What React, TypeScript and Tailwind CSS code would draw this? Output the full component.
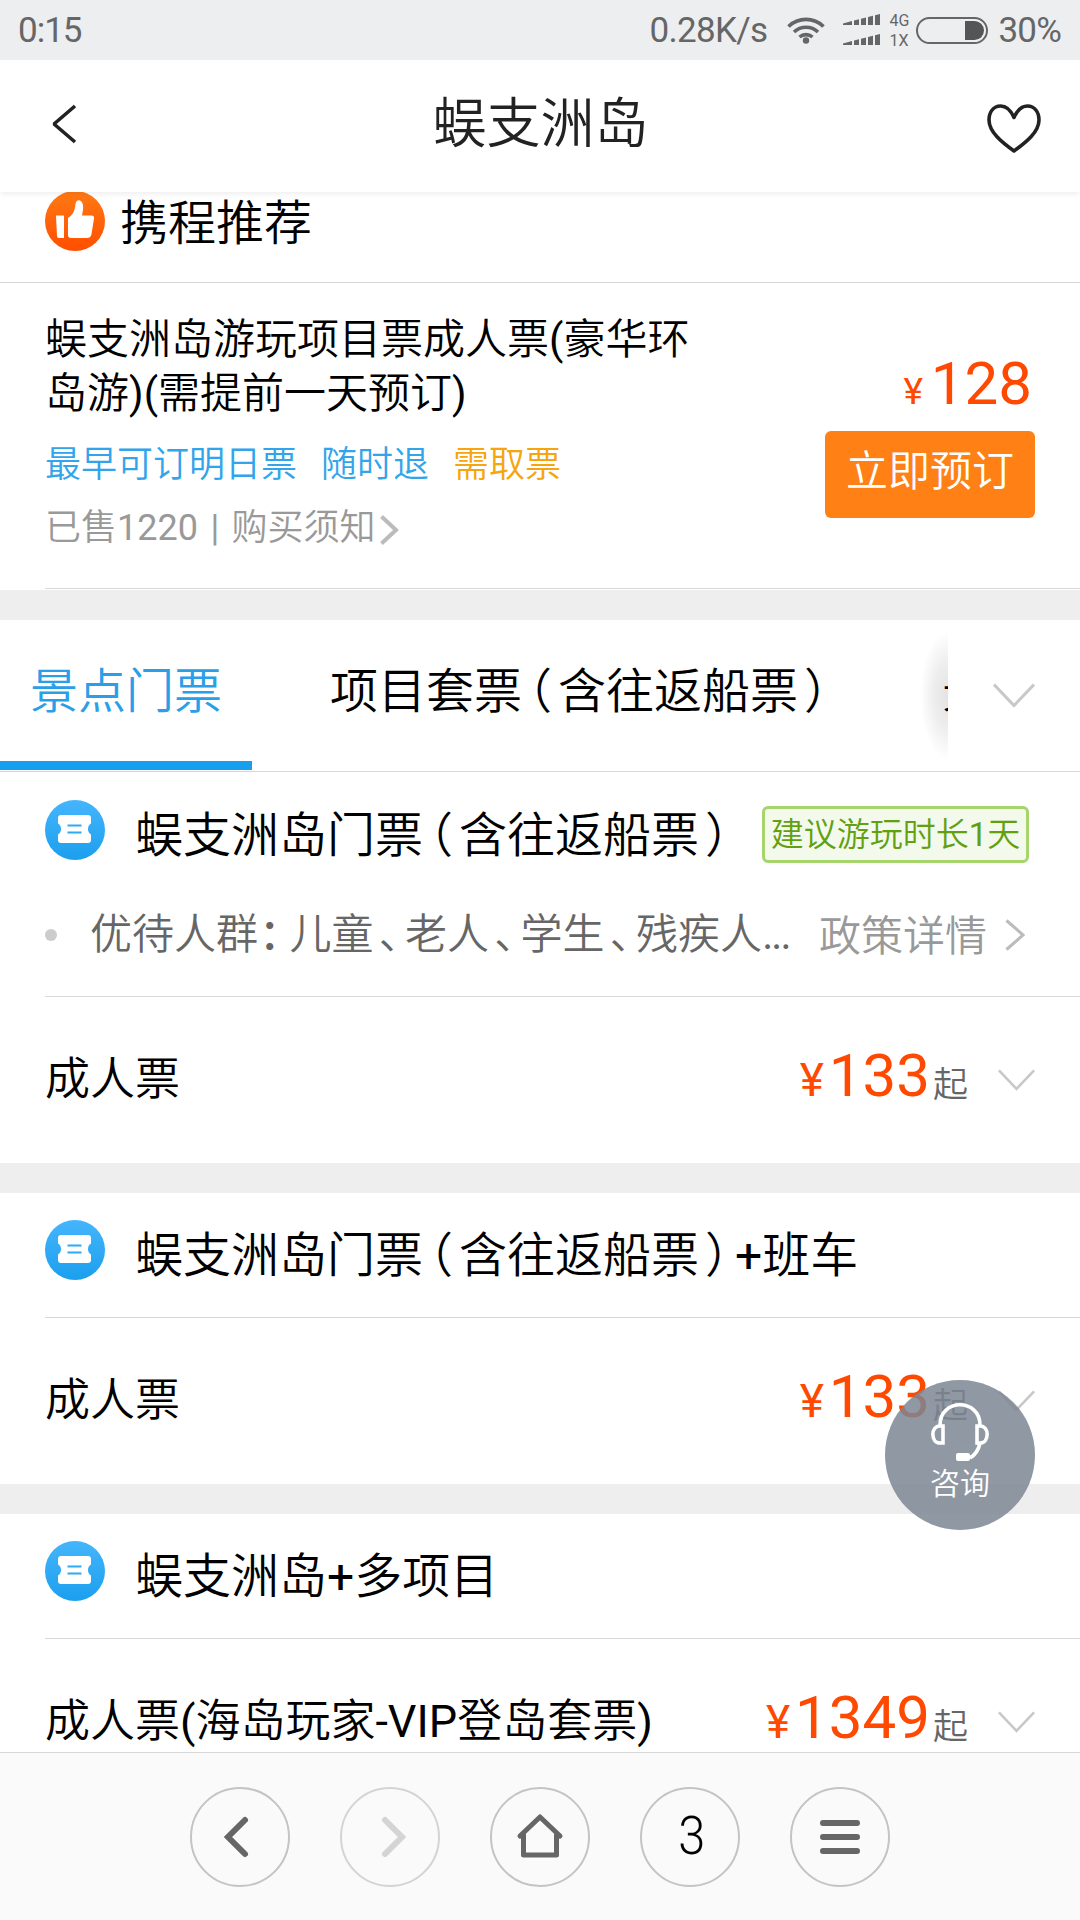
import { Fragment, type ReactNode } from 'react';

interface TicketGroup {
  id: string;
  title: string;
  badge?: string;
  policy?: string;
  ticket: string;
  price: string;
}

const groups: TicketGroup[] = [
  {
    id: 'entry',
    title: '蜈支洲岛门票（含往返船票）',
    badge: '建议游玩时长1天',
    policy: '优待人群：儿童、老人、学生、残疾人...',
    ticket: '成人票',
    price: '133',
  },
  {
    id: 'bus',
    title: '蜈支洲岛门票（含往返船票）+班车',
    ticket: '成人票',
    price: '133',
  },
  {
    id: 'multi',
    title: '蜈支洲岛+多项目',
    ticket: '成人票(海岛玩家-VIP登岛套票)',
    price: '1349',
  },
];

// Full-width punctuation is set three quarters of an em wide,
// latin runs get the regular weight next to the lighter hanzi
const Han = ({ children }: { children: string }) => (
  <>
    {children.split(/([（）：、]|[ -~]+)/).map((part, i) => {
      if (part === '：') {
        return (
          <span key={i} className="ml-[0.03em] mr-[0.22em] font-medium [font-feature-settings:'halt']">
            {part}
          </span>
        );
      }
      if (/^[（）、]$/.test(part)) {
        return (
          <span key={i} className="mx-[0.125em] [font-feature-settings:'halt']">
            {part}
          </span>
        );
      }
      if (part === '...') {
        return (
          <span key={i} className="font-normal tracking-[-0.045em]">
            {part}
          </span>
        );
      }
      if (/^[ -~]+$/.test(part)) {
        return (
          <span key={i} className="font-normal">
            {part}
          </span>
        );
      }
      return <Fragment key={i}>{part}</Fragment>;
    })}
  </>
);

const ChevronDown = ({ className }: { className: string }) => (
  <svg viewBox="0 0 42 25" className={className} fill="none" stroke="#c8c8c8" strokeWidth="3">
    <path d="M1 1.5 21 22.5 41 1.5" />
  </svg>
);

const StatusBar = () => (
  <div className="flex h-[60px] items-center bg-[#edeef0] pl-[18px] pr-[19px] text-[35px] leading-[60px] text-[#666]">
    <span className="pt-[2px] -tracking-[1px]">0:15</span>
    <span className="ml-auto pt-[2px] -tracking-[0.7px]">0.28K/s</span>
    <svg viewBox="0 0 38 28" className="ml-[20px] h-7 w-[38px]" fill="none" stroke="#666" strokeWidth="3.6">
      <path d="M1.5 10.5a25 25 0 0 1 35 0M7 16a17.5 17.5 0 0 1 24 0M12.5 21a10 10 0 0 1 13 0" />
      <circle cx="19" cy="24.5" r="3.2" fill="#666" stroke="none" />
    </svg>
    <svg viewBox="0 0 37 32" className="ml-[18px] h-8 w-[37px]" fill="#666">
      <path d="M0 9.5 9 7v4H0zM11 6.5l5-1.2V11h-5zM18 4.7l5-1.2V11h-5zM25 3l5-1.2V11h-5zM32 1.2 37 0v11h-5z" />
      <path d="M0 29.5 9 27v4H0zM11 26.5l5-1.2V31h-5zM18 24.7l5-1.2V31h-5zM25 23l5-1.2V31h-5zM32 21.2 37 20v11h-5z" />
    </svg>
    <span className="ml-[9px] mt-px flex w-[22px] flex-col text-[16px] leading-5">
      <span>4G</span>
      <span>1X</span>
    </span>
    <span className="ml-[5px] flex h-[27px] w-[72px] justify-end rounded-full border-2 border-[#666] p-[2px]">
      <span className="w-[19px] rounded-r-full bg-[#555]" />
    </span>
    <span className="ml-[10px] pt-[2px] -tracking-[0.8px]">30%</span>
  </div>
);

const Header = () => (
  <header className="relative z-10 flex h-[132px] items-center justify-between bg-white pl-[51px] pr-[38px] shadow-[0_3px_5px_-1px_rgba(0,0,0,0.07)]">
    <svg viewBox="0 0 26 40" className="-mt-1 h-10 w-[26px]" fill="none" stroke="#222" strokeWidth="3.6" strokeLinejoin="bevel">
      <path d="M24 2 3 20l21 18" />
    </svg>
    <h1 className="pb-[3px] pl-[18px] text-[54px] font-[350] leading-[60px] text-[#222]">蜈支洲岛</h1>
    <svg viewBox="0 0 56 50" className="mt-1 h-[50px] w-14" fill="none" stroke="#222" strokeWidth="3.6" strokeLinejoin="round">
      <path d="M28 14.5C24.5 6.5 20 3 14.5 3 7.5 3 3 9 3 17c0 12 13 22.5 25 31 12-8.5 25-19 25-31 0-8-4.5-14-11.5-14C36 3 31.5 6.5 28 14.5z" />
    </svg>
  </header>
);

const ThumbIcon = () => (
  <svg viewBox="0 0 60 60" className="size-[60px]">
    <defs>
      <linearGradient id="thumb" x1="0" y1="0" x2="0" y2="1">
        <stop offset="0" stopColor="#ff7a14" />
        <stop offset="1" stopColor="#ff4e00" />
      </linearGradient>
    </defs>
    <circle cx="30" cy="30" r="30" fill="url(#thumb)" />
    <g fill="#fff">
      <path d="M11 24.5h8V47h-5q-2 0-2-2z" />
      <path d="M23 27c4-2 7-7 7.5-14 .5-5.5 6.5-5 7.5 1 .5 4-.5 7-1 10.5h9.5q3 0 2.5 3L46.5 43q-.5 4-4.5 4H26q-3 0-3-3z" />
    </g>
  </svg>
);

const TicketIcon = () => (
  <svg viewBox="0 0 60 60" className="size-[60px] shrink-0">
    <defs>
      <linearGradient id="ticket" x1="0" y1="0" x2="0" y2="1">
        <stop offset="0" stopColor="#45b5fc" />
        <stop offset="1" stopColor="#1b9fee" />
      </linearGradient>
    </defs>
    <circle cx="30" cy="30" r="30" fill="url(#ticket)" />
    <path
      d="M16 15h27q3 0 3 3v5.5c-4 2-4 9 0 11V40q0 3-3 3H16q-3 0-3-3v-5.5c4-2 4-9 0-11V18q0-3 3-3z"
      fill="#fff"
    />
    <path d="M22.5 25.5h14M22.5 32.5h14" stroke="#2ea9f5" strokeWidth="2" />
  </svg>
);

const Recommended = () => (
  <section>
    <div className="-mt-px flex h-[92px] gap-[15px] border-b border-[#d8d8d8] pl-[45px]">
      <ThumbIcon />
      <h2 className="pt-[3px] text-[48px] leading-[60px]">携程推荐</h2>
    </div>
    <div className="flex h-[305px] justify-between pl-[45px] pr-[45px]">
      <div className="flex w-[660px] flex-col pt-[30px]">
        <h3 className="text-[42px] leading-[54px]">
          <Han>蜈支洲岛游玩项目票成人票(豪华环岛游)(需提前一天预订)</Han>
        </h3>
        <p className="mt-[17px] flex gap-6 text-[36px] leading-[54px] text-[#32a5ea]">
          <span>最早可订明日票</span>
          <span>随时退</span>
          <span className="text-[#f5a50f]">需取票</span>
        </p>
        <p className="mt-[9px] flex items-center text-[36px] leading-[54px] text-[#999]">
          <span className="[word-spacing:3.5px]">
            <Han>已售1220 | 购买须知</Han>
          </span>
          <svg viewBox="0 0 20 30" className="ml-1 mt-1 h-[30px] w-5" fill="none" stroke="#bbb" strokeWidth="4">
            <path d="M1.5 1.5 16 15 1.5 28.5" />
          </svg>
        </p>
      </div>
      <div className="flex flex-col items-end pt-[64px]">
        <p className="pr-[3px] font-normal leading-[74px] text-[#ff4800]">
          <span className="mr-2 text-[37px]">¥</span>
          <span className="text-[60px]">128</span>
        </p>
        <button
          type="button"
          className="-mt-[5px] h-[87px] w-[210px] rounded-[6px] bg-[#ff8014] pb-[6px] text-[42px] text-white"
        >
          立即预订
        </button>
      </div>
    </div>
    <div className="ml-[45px] h-px bg-[#d8d8d8]" />
    <div className="mt-px h-[30px] bg-[#eee]" />
  </section>
);

const Tabs = () => (
  <nav className="mb-px flex h-[152px] border-b border-[#d8d8d8] text-[48px] leading-[143px]">
    <div className="flex w-[948px] gap-12 overflow-hidden whitespace-nowrap bg-[radial-gradient(28px_64px_at_right_center,rgba(0,0,0,0.11),rgba(0,0,0,0.07)_50%,transparent)]">
      <span className="h-[150px] shrink-0 border-b-[9px] border-[#169fee] px-[30px] text-[#2a9fe8]">
        景点门票
      </span>
      <span className="shrink-0 px-[30px]">
        <Han>项目套票（含往返船票）</Han>
      </span>
      <span className="shrink-0 px-[30px]">景</span>
    </div>
    <ChevronDown className="ml-[45px] mt-[63px] h-[25px] w-[42px]" />
  </nav>
);

const Price = ({ value }: { value: string }) => (
  <p className="flex items-baseline font-normal leading-[72px] text-[#ff4800]">
    <span className="mr-[5px] text-[46px]">¥</span>
    <span className="text-[60px]">{value}</span>
    <span className="relative top-px ml-[3px] text-[35px] font-[350] text-[#666]">起</span>
  </p>
);

const TicketSection = ({ group, children }: { group: TicketGroup; children?: ReactNode }) => (
  <section>
    <div className="flex h-[124px] pl-[45px] pt-[27px]">
      <TicketIcon />
      <h2 className="ml-[30px] mt-[6px] text-[48px] leading-[60px]">
        <Han>{group.title}</Han>
      </h2>
      {group.badge && (
        <span className="ml-[27px] mt-[6px] h-[57px] w-[267px] shrink-0 whitespace-nowrap rounded-[6px] border-[3px] border-[#a5d56b] bg-[#f3f9eb] text-center text-[33px] leading-[51px] text-[#62a010]">
          <Han>{group.badge}</Han>
        </span>
      )}
    </div>
    {children}
    <div className="ml-[45px] h-px bg-[#d8d8d8]" />
    <div className="flex h-[166px] items-center pl-[45px] pr-[45px]">
      <h3 className="grow text-[45px] leading-[60px]">
        <Han>{group.ticket}</Han>
      </h3>
      <Price value={group.price} />
      <ChevronDown className="ml-[30px] h-[22px] w-[37px]" />
    </div>
  </section>
);

const PolicyRow = ({ text }: { text: string }) => (
  <div className="flex h-[99px] items-center pb-[23px] pl-[45px] pr-[55px] text-[42px] leading-[60px]">
    <span className="mr-[33px] size-3 rounded-full bg-[#ccc]" />
    <span className="text-[#666]">
      <Han>{text}</Han>
    </span>
    <span className="ml-auto mt-[3px] text-[#999]">政策详情</span>
    <svg viewBox="0 0 20 32" className="ml-[18px] h-8 w-5" fill="none" stroke="#bbb" strokeWidth="3">
      <path d="M1.5 1.5 18 16 1.5 30.5" />
    </svg>
  </div>
);

const ConsultButton = () => (
  <button
    type="button"
    className="absolute left-[885px] top-[1380px] z-20 flex size-[150px] flex-col items-center rounded-full bg-[rgba(124,134,147,0.85)] pt-[22px] text-white"
  >
    <svg viewBox="0 0 58 62" className="h-[62px] w-[58px]" fill="none" stroke="#fff" strokeWidth="3.6">
      <path d="M9 23C9-4 49-4 49 23" />
      <path d="M12 24v17H9C-.5 41-.5 24 9 24zM46 24v17h3c9.5 0 9.5-17 0-17zM49 41c-1.5 7-5 12-10 15" />
      <rect x="25" y="51" width="14" height="8" rx="2" fill="#fff" stroke="none" />
    </svg>
    <span className="mt-[2px] text-[30px] font-[350] leading-[36px]">咨询</span>
  </button>
);

const NavButton = ({ label, children, faded }: { label: string; children: ReactNode; faded?: boolean }) => (
  <button
    type="button"
    aria-label={label}
    className={`flex size-[100px] items-center justify-center rounded-full border-2 ${
      faded ? 'border-[#d4d4d4]' : 'border-[#c4c4c4]'
    }`}
  >
    {children}
  </button>
);

const BottomBar = () => (
  <footer className="relative z-10 flex h-[168px] shrink-0 items-center justify-center gap-[50px] border-t border-[#d8d8d8] bg-[#fafafa]">
    <NavButton label="后退">
      <svg viewBox="0 0 50 50" className="size-[50px]" fill="none" stroke="#666" strokeWidth="6" strokeLinecap="round">
        <path d="M30 8 13 25l17 17" />
      </svg>
    </NavButton>
    <NavButton label="前进" faded>
      <svg viewBox="0 0 50 50" className="size-[50px]" fill="none" stroke="#d4d4d4" strokeWidth="6" strokeLinecap="round">
        <path d="m20 8 17 17-17 17" />
      </svg>
    </NavButton>
    <NavButton label="主页">
      <svg viewBox="0 0 50 50" className="size-[50px]" fill="none" stroke="#666" strokeWidth="5" strokeLinecap="round" strokeLinejoin="round">
        <path d="M5 24 25 5l20 19M8.5 23v20h33V23" />
      </svg>
    </NavButton>
    <NavButton label="窗口">
      <span className="scale-x-90 pb-[2px] pl-[3px] text-[54px] font-[350] leading-none">3</span>
    </NavButton>
    <NavButton label="菜单">
      <svg viewBox="0 0 50 50" className="size-[50px]" stroke="#666" strokeWidth="6" strokeLinecap="round">
        <path d="M8 11h34M8 25h34M8 39h34" />
      </svg>
    </NavButton>
  </footer>
);

const App = () => (
  <div className="relative flex h-[1920px] w-[1080px] flex-col overflow-hidden bg-white font-[Roboto,'Noto_Sans_CJK_SC',sans-serif] text-black">
    <StatusBar />
    <Header />
    <main className="h-[1560px] overflow-hidden font-[350]">
      <Recommended />
      <Tabs />
      {groups.map((group, i) => (
        <Fragment key={group.id}>
          {i > 0 && <div className="h-[30px] bg-[#eee]" />}
          <TicketSection group={group}>
            {group.policy && <PolicyRow text={group.policy} />}
          </TicketSection>
        </Fragment>
      ))}
    </main>
    <BottomBar />
    <ConsultButton />
  </div>
);

export default App;
